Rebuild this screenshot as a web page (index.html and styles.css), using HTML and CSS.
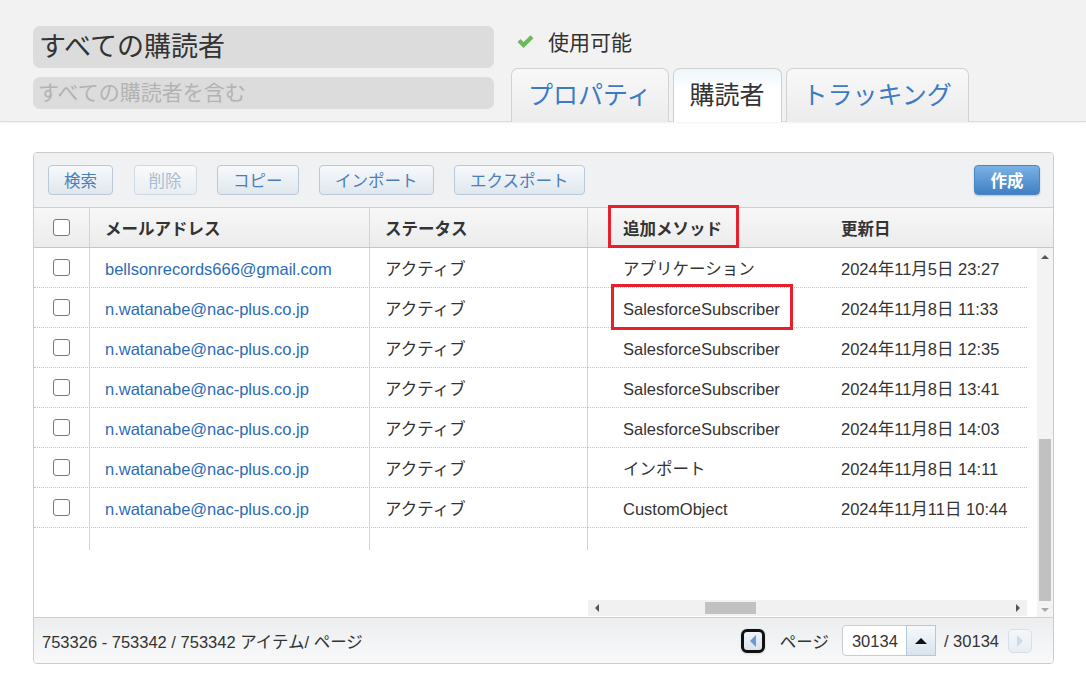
FILE: index.html
```html
<!DOCTYPE html>
<html lang="ja">

<head>
    <meta charset="UTF-8" />
    <meta name="viewport" content="width=device-width, initial-scale=1.0" />
    <title>すべての購読者</title>
    <link rel="stylesheet" href="styles.css">
</head>

<body>
    <div class="top">
        <div class="names">
            <div class="name-box">すべての購読者</div>
            <div class="desc-box">すべての購読者を含む</div>
        </div>
        <div class="top-right">
            <div class="status">
                <svg class="check" width="17" height="13" viewBox="0 0 17 13">
                    <path d="M0.5 7 L3.5 4 L6.6 7.1 L13.5 0.2 L16.5 3.2 L6.6 13 Z" fill="#6cb95c" />
                </svg>
                <span>使用可能</span>
            </div>
            <div class="tabs">
                <div class="tab">プロパティ</div>
                <div class="tab active">購読者</div>
                <div class="tab">トラッキング</div>
            </div>
        </div>
    </div>

    <div class="panel">
        <div class="toolbar">
            <div class="btns">
                <button class="btn">検索</button>
                <button class="btn disabled">削除</button>
                <button class="btn">コピー</button>
                <button class="btn">インポート</button>
                <button class="btn">エクスポート</button>
            </div>
            <button class="btn-create">作成</button>
        </div>

        <div class="head">
            <div class="c-cb line"><span class="cb"></span></div>
            <div class="c-mail line">メールアドレス</div>
            <div class="c-stat line">ステータス</div>
            <div class="c-meth"><span class="mark">追加メソッド</span></div>
            <div class="c-date">更新日</div>
        </div>

        <div class="body">
            <div class="pane-left" id="leftRows"></div>
            <div class="pane-right">
                <div id="rightRows"></div>
                <div class="spacer"></div>
                <div class="hscroll">
                    <span class="arr arr-left"></span>
                    <span class="hthumb"></span>
                    <span class="arr arr-right"></span>
                </div>
            </div>
            <div class="vscroll">
                <span class="arr arr-up"></span>
                <span class="vthumb"></span>
                <span class="arr arr-down"></span>
            </div>
        </div>

        <div class="footer">
            <div class="count">753326 - 753342 / 753342 アイテム/ ページ</div>
            <div class="pager">
                <button class="pg-btn prev"><span class="tri-left"></span></button>
                <span class="pg-label">ページ</span>
                <div class="pg-input">
                    <span class="pg-num">30134</span>
                    <span class="pg-spin"><span class="tri-up"></span></span>
                </div>
                <span class="pg-total">/ 30134</span>
                <button class="pg-btn next"><span class="tri-right"></span></button>
            </div>
        </div>
    </div>

    <script>
        const rows = [
            ["bellsonrecords666@gmail.com", "アクティブ", "アプリケーション", "2024年11月5日 23:27"],
            ["n.watanabe@nac-plus.co.jp", "アクティブ", "SalesforceSubscriber", "2024年11月8日 11:33"],
            ["n.watanabe@nac-plus.co.jp", "アクティブ", "SalesforceSubscriber", "2024年11月8日 12:35"],
            ["n.watanabe@nac-plus.co.jp", "アクティブ", "SalesforceSubscriber", "2024年11月8日 13:41"],
            ["n.watanabe@nac-plus.co.jp", "アクティブ", "SalesforceSubscriber", "2024年11月8日 14:03"],
            ["n.watanabe@nac-plus.co.jp", "アクティブ", "インポート", "2024年11月8日 14:11"],
            ["n.watanabe@nac-plus.co.jp", "アクティブ", "CustomObject", "2024年11月11日 10:44"]
        ];

        // latin-only text sits a little high next to the CJK font
        const isLatin = s => /^[\x20-\x7e]+$/.test(s);

        let left = "";
        let right = "";
        rows.forEach((r, i) => {
            left += `<div class="row">
                <div class="c-cb line"><span class="cb"></span></div>
                <div class="c-mail line"><a class="mail latin">${r[0]}</a></div>
                <div class="c-stat line">${r[1]}</div>
            </div>`;
            let meth = `<span class="${isLatin(r[2]) ? "latin" : ""}">${r[2]}</span>`;
            if (i === 1) {
                meth = `<span class="mark mark-cell latin">${r[2]}</span>`;
            }
            right += `<div class="row">
                <div class="c-meth">${meth}</div>
                <div class="c-date">${r[3]}</div>
            </div>`;
        });
        left += `<div class="row filler">
            <div class="c-cb line"></div>
            <div class="c-mail line"></div>
            <div class="c-stat line"></div>
        </div>`;
        right += `<div class="row filler"></div>`;

        document.getElementById("leftRows").innerHTML = left;
        document.getElementById("rightRows").innerHTML = right;
    </script>
</body>

</html>
```

FILE: styles.css
```css
body {
    margin: 0;
    background: #fff;
    color: #333;
    font-family: "Liberation Sans", "Noto Sans CJK JP", sans-serif;
}

/* top header area */
.top {
    display: flex;
    gap: 17px;
    height: 122px;
    padding-left: 33px;
    background: #f2f2f2;
    border-bottom: 1px solid #dcdcdc;
    box-shadow: 0 1px 2px rgba(0, 0, 0, 0.06);
    box-sizing: border-box;
}

.names {
    width: 461px;
    padding-top: 26px;
}

.name-box {
    height: 42px;
    line-height: 42px;
    padding-left: 6px;
    background: #dcdcdc;
    border-radius: 7px;
    font-size: 27px;
    color: #333;
}

.desc-box {
    height: 32px;
    line-height: 32px;
    margin-top: 9px;
    padding-left: 5px;
    background: #dcdcdc;
    border-radius: 7px;
    font-size: 21px;
    color: #b3b3b3;
}

.top-right {
    display: flex;
    flex-direction: column;
    padding-top: 28px;
}

.status {
    display: flex;
    align-items: center;
    height: 26px;
    padding-left: 6px;
    font-size: 21px;
}

.check {
    margin-right: 14px;
}

.tabs {
    display: flex;
    gap: 4px;
    margin-top: auto;
    margin-bottom: -1px;
}

.tab {
    height: 53px;
    line-height: 52px;
    padding: 0 16px;
    font-size: 25px;
    color: #3b7bc4;
    background: linear-gradient(#f8f8f8, #ececec);
    border: 1px solid #d2d2d2;
    border-bottom: none;
    border-radius: 7px 7px 0 0;
}

.tab.active {
    color: #333;
    background: linear-gradient(#eef6fb, #fff 40%);
    border-color: #cfcfcf;
}

/* main panel */
.panel {
    margin: 30px 32px 0 33px;
    border: 1px solid #cccccc;
    border-radius: 4px;
    overflow: hidden;
}

.toolbar {
    display: flex;
    justify-content: space-between;
    align-items: flex-start;
    height: 54px;
    padding: 12px 13px 0 14px;
    box-sizing: border-box;
    background: #f0f1f2;
}

.btns {
    display: flex;
    gap: 20.5px;
}

.btn {
    height: 30px;
    padding: 0 15px;
    font-family: inherit;
    font-size: 16.5px;
    color: #4a7fb8;
    background: linear-gradient(#f7f9fb, #dfe7ee);
    border: 1px solid #b9c9d7;
    border-radius: 4px;
}

.btn.disabled {
    padding: 0 14px;
    color: #a8bdd0;
    border-color: #cfdae4;
    background: linear-gradient(#f9fafb, #e9eef2);
}

.btn-create {
    width: 66px;
    height: 30px;
    font-family: inherit;
    font-size: 16.5px;
    font-weight: bold;
    color: #fff;
    background: linear-gradient(#7bb2e6, #3f7fc3);
    border: 1px solid #4a86c5;
    border-radius: 4px;
    box-shadow: 0 1px 2px rgba(0, 0, 0, 0.2);
}

/* grid */
.head {
    display: flex;
    height: 41px;
    border-top: 1px solid #d0d0d0;
    border-bottom: 1px solid #c6c6c6;
    box-sizing: border-box;
    background: linear-gradient(#f7f7f7, #ececec);
    font-size: 16.5px;
    font-weight: bold;
}

.head > div,
.row > div {
    display: flex;
    align-items: center;
    box-sizing: border-box;
    white-space: nowrap;
}

.c-cb {
    width: 56px;
    justify-content: center;
}

.c-mail {
    width: 280px;
    padding-left: 15px;
}

.c-stat {
    width: 218px;
    padding-left: 15px;
}

.c-meth {
    width: 237px;
    padding-left: 35px;
}

.c-date {
    width: 202px;
    padding-left: 16px;
}

.line {
    border-right: 1px solid #d3d3d3;
}

.cb {
    width: 17px;
    height: 17px;
    border: 1.5px solid #777;
    border-radius: 3px;
    background: #fff;
    box-sizing: border-box;
}

.body {
    display: flex;
    height: 369px;
}

.pane-left {
    width: 554px;
}

.pane-right {
    width: 439px;
    display: flex;
    flex-direction: column;
}

.row {
    display: flex;
    height: 40px;
    border-bottom: 1px dotted #c4c4c4;
    box-sizing: border-box;
    font-size: 16.5px;
}

.row.filler {
    height: 22px;
    border-bottom: none;
}

.mail {
    color: #2b6cb8;
}

.latin {
    padding-top: 3px;
}

.mark {
    position: relative;
}

.mark::after {
    content: "";
    position: absolute;
    left: -15px;
    right: -17px;
    top: -11px;
    bottom: -8px;
    border: 3px solid #e8202a;
}

.mark-cell::after {
    left: -12px;
    right: -13px;
    top: -13px;
    bottom: -11px;
}

.spacer {
    flex: 1;
}

.hscroll {
    position: relative;
    height: 16px;
    margin-bottom: 1px;
    background: #f1f1f1;
}

.hthumb {
    position: absolute;
    left: 117px;
    top: 2px;
    width: 51px;
    height: 12px;
    background: #c1c1c1;
}

.vscroll {
    position: relative;
    width: 16px;
    margin-left: 10px;
    background: #f3f3f3;
}

.vthumb {
    position: absolute;
    left: 2px;
    top: 191px;
    width: 12px;
    height: 162px;
    background: #c1c1c1;
}

.arr {
    position: absolute;
    width: 0;
    height: 0;
}

.arr-up {
    left: 4px;
    top: 7px;
    border-left: 4px solid transparent;
    border-right: 4px solid transparent;
    border-bottom: 4px solid #555;
}

.arr-down {
    left: 4px;
    bottom: 5px;
    border-left: 4px solid transparent;
    border-right: 4px solid transparent;
    border-top: 4px solid #a8a8a8;
}

.arr-left {
    left: 7px;
    top: 4px;
    border-top: 4px solid transparent;
    border-bottom: 4px solid transparent;
    border-right: 4px solid #555;
}

.arr-right {
    right: 7px;
    top: 4px;
    border-top: 4px solid transparent;
    border-bottom: 4px solid transparent;
    border-left: 4px solid #555;
}

/* footer / pager */
.footer {
    display: flex;
    justify-content: space-between;
    align-items: center;
    height: 46px;
    padding: 0 21px 0 8px;
    box-sizing: border-box;
    border-top: 1px solid #cfcfcf;
    background: linear-gradient(#ebedef, #f9f9fa);
    font-size: 16.5px;
}

.count {
    padding-top: 1px;
}

.pager {
    display: flex;
    align-items: center;
}

.pg-btn {
    display: flex;
    align-items: center;
    justify-content: center;
    width: 24px;
    height: 24px;
    padding: 0;
    border-radius: 5px;
}

.prev {
    border: 3px solid #111;
    border-radius: 6px;
    background: linear-gradient(#eef3f8, #d9e4ee);
    box-shadow: 0 0 0 1px #e3e9ee, 0 1px 2px rgba(0, 0, 0, 0.15);
}

.next {
    margin-left: 9px;
    border: 1px solid #d5e0e9;
    background: linear-gradient(#f4f7fa, #e6edf3);
}

.tri-left {
    border-top: 6px solid transparent;
    border-bottom: 6px solid transparent;
    border-right: 6px solid #6a9ad0;
}

.tri-right {
    border-top: 6px solid transparent;
    border-bottom: 6px solid transparent;
    border-left: 6px solid #cddbe7;
}

.pg-label {
    margin: 0 13px 0 15px;
}

.pg-input {
    display: flex;
    height: 31px;
    border: 1px solid #c5ced6;
    border-radius: 4px 0 0 4px;
    background: #fff;
    box-sizing: border-box;
}

.pg-num {
    width: 63px;
    padding: 2px 0 0 9px;
    line-height: 27px;
    box-sizing: border-box;
}

.pg-spin {
    display: flex;
    align-items: center;
    justify-content: center;
    width: 28px;
    margin: -1px -1px -1px 0;
    border: 1px solid #b6c7d6;
    background: linear-gradient(#f6f9fc, #d8e4ee);
}

.tri-up {
    border-left: 6px solid transparent;
    border-right: 6px solid transparent;
    border-bottom: 6px solid #111;
}

.pg-total {
    margin-left: 8px;
    padding-top: 1px;
}
```
